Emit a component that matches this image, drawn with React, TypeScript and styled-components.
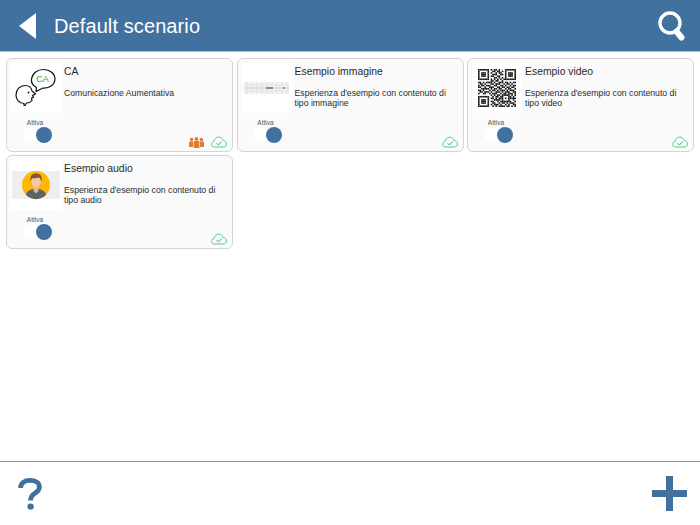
import React from 'react';
import styled, { createGlobalStyle } from 'styled-components';

const Global = createGlobalStyle`
  html, body {
    margin: 0;
    padding: 0;
    background: #fff;
    font-family: "Liberation Sans", Arial, sans-serif;
  }
`;

const Page = styled.div`
  width: 700px;
  height: 525px;
  display: flex;
  flex-direction: column;
  overflow: hidden;
`;

const Header = styled.header`
  height: 51px;
  flex: none;
  background: #41719f;
  border-bottom: 1px solid #a9bfd4;
  display: flex;
  align-items: center;
  padding: 0 15px 0 19px;
  color: #fff;
`;

const Title = styled.h1`
  flex: 1;
  margin: 1px 0 0 18px;
  font-size: 20px;
  font-weight: 400;
  letter-spacing: 0.1px;
`;

const Grid = styled.main`
  flex: 1;
  display: grid;
  grid-template-columns: repeat(3, 227px);
  grid-auto-rows: 94px;
  column-gap: 3.5px;
  row-gap: 3px;
  align-content: start;
  padding: 6px 6px 0;
`;

const Card = styled.article`
  position: relative;
  box-sizing: border-box;
  display: grid;
  grid-template-columns: 50px 1fr;
  column-gap: 3px;
  padding: 4px 10px 0 4px;
  background: #fafafa;
  border: 1px solid #d4d4d4;
  border-radius: 6px;
`;

const Side = styled.div`
  display: flex;
  flex-direction: column;
  align-items: center;
`;

const Thumb = styled.div`
  width: 50px;
  height: 50px;
  background: #fff;
  display: flex;
  align-items: center;
  justify-content: center;
`;

const ToggleLabel = styled.span`
  margin-top: 6px;
  margin-right: 2px;
  font-size: 6.5px;
  line-height: 7px;
  color: #555;
`;

const Toggle = styled.div`
  position: relative;
  width: 22px;
  height: 13px;
  margin-top: 2px;
  margin-right: 5px;
  background: #fff;
  border-radius: 7px;
`;

const Knob = styled.span`
  position: absolute;
  right: -7px;
  top: -1.5px;
  width: 16px;
  height: 16px;
  border-radius: 50%;
  background: #41719f;
`;

const Body = styled.div`
  padding-top: 2px;
`;

const CardTitle = styled.h2`
  margin: 0;
  font-size: 10.4px;
  line-height: 13px;
  font-weight: 400;
  color: #2a2a2a;
`;

const CardText = styled.p`
  margin: 9.5px 0 0;
  font-size: 8.7px;
  line-height: 10.5px;
  color: #2a2a2a;
`;

const Badges = styled.div`
  position: absolute;
  right: 5px;
  bottom: 3px;
  display: flex;
  align-items: center;
  gap: 7px;
`;

const Footer = styled.footer`
  height: 64px;
  flex: none;
  box-sizing: border-box;
  border-top: 1px solid #7d9ab8;
  display: flex;
  align-items: center;
  justify-content: space-between;
  padding: 0 13px 0 18px;
`;

const SpeechIcon = () => (
  <svg width="50" height="50" viewBox="0 0 50 50">
    <g fill="#fff" stroke="#111" strokeWidth="1.2" strokeLinejoin="round" strokeLinecap="round">
      <path d="M25 28.5 L25.5 24.5 C21.5 22.5 20 19.5 20.5 16 C21.5 10 26.5 6.5 32.5 6.5 C39 6.5 44 10.5 44 16 C44 21.5 38.5 25.5 32 25 Z" />
      <path d="M13 42.5 L13 40.5 C8 40.5 5 36.5 5 32 C5 26.5 9 22.5 14 22.5 C18 22.5 20.5 25 21 28 L24.5 31 L21.5 32.5 L22.5 34.5 L20.5 35 L21 37.5 C19.5 39.5 17.5 40 15.5 40 L14 42.5 Z" />
    </g>
    <text x="31.5" y="18.5" textAnchor="middle" fontFamily="Liberation Sans" fontSize="9" fill="#3aa63a">CA</text>
    <circle cx="17.5" cy="29.5" r="0.9" fill="#111" />
  </svg>
);

const ChartThumb = () => (
  <svg width="50" height="50" viewBox="0 0 50 50">
    <rect x="2" y="19" width="45" height="12" fill="#f2f2f2" />
    <g stroke="#cfcfcf" strokeWidth="0.4">
      {[5, 10, 15, 20, 25, 30, 35, 40, 45].map(x => (
        <line key={x} x1={x} y1="19" x2={x} y2="31" />
      ))}
      <line x1="2" y1="22" x2="47" y2="22" />
      <line x1="2" y1="28" x2="47" y2="28" />
    </g>
    <line x1="2" y1="25" x2="47" y2="25" stroke="#bbb" strokeWidth="0.6" />
    <rect x="24" y="24" width="7" height="2" fill="#8c8c8c" />
    <circle cx="42" cy="25" r="1" fill="#888" />
  </svg>
);

// finder patterns plus a hand-picked fill for the data modules
const QR_ROWS = [
  '111111101011010001111111',
  '100000100110110101000001',
  '101110101001011001011101',
  '101110100111001101011101',
  '101110101100110001011101',
  '100000100011010101000001',
  '111111101010101011111111',
  '000000001101100100000000',
  '110101111010011101101011',
  '011010001101110010110100',
  '101101110011001101001011',
  '110010011100110110110110',
  '001111101011011001011001',
  '110100010110101110101110',
  '011011101001110101110011',
  '100110010111001011011101',
  '000000001010110111110101',
  '111111100101101100011010',
  '100000101101011101011111',
  '101110100011110100010010',
  '101110101100101111111001',
  '101110100110010110101110',
  '100000101011101001010011',
  '111111100101011110110101',
];

const QrThumb = () => (
  <svg width="38" height="38" viewBox="0 0 24 24">
    {QR_ROWS.map((row, y) =>
      row.split('').map((c, x) =>
        c === '1' ? <rect key={`${x}-${y}`} x={x} y={y} width="1" height="1" fill="#111" /> : null
      )
    )}
  </svg>
);

const AvatarThumb = () => (
  <svg width="50" height="50" viewBox="0 0 50 50">
    <rect x="1" y="11" width="48" height="28" fill="#eeeeee" />
    <circle cx="25" cy="25" r="14" fill="#fdb900" />
    <path d="M15 35 C15.5 31 19 30 22 29 L28 29 C31 30 34.5 31 35 35 C29 40.5 21 40.5 15 35 Z" fill="#58636c" />
    <path d="M22.5 25 L27.5 25 L27.5 31 L25 33.5 L22.5 31 Z" fill="#e9b78f" />
    <ellipse cx="25" cy="21.5" rx="4.8" ry="6.2" fill="#f3c9a5" />
    <path d="M19.8 22 C18 15.5 22 13 25.5 13.5 C29.5 13.5 32 16.5 30.2 22 C30 19.5 29 18 27.5 17.5 C25 18.5 22 18 20.8 18.5 C20 19.5 20 21 19.8 22 Z" fill="#8a5630" />
  </svg>
);

const PeopleIcon = () => (
  <svg width="15" height="11" viewBox="0 0 15 11" fill="#e07b39">
    <circle cx="2.6" cy="2.6" r="1.8" />
    <circle cx="7.5" cy="1.9" r="1.9" />
    <circle cx="12.4" cy="2.6" r="1.8" />
    <path d="M0 5.2 Q0 4.6 1 4.6 L4 4.6 L4 10 L0 10 Z" />
    <path d="M4.6 4.2 Q4.6 3.9 5.4 3.9 L9.6 3.9 Q10.4 3.9 10.4 4.2 L10.4 11 L4.6 11 Z" />
    <path d="M11 4.6 L14 4.6 Q15 4.6 15 5.2 L15 10 L11 10 Z" />
  </svg>
);

const CloudIcon = () => (
  <svg width="16" height="12" viewBox="0 0 17 12" fill="none" stroke="#3fd07c" strokeWidth="1" strokeLinecap="round" strokeLinejoin="round">
    <path d="M3.6 11.3 C1.6 11.3 0.5 10 0.5 8.5 C0.5 7 1.6 5.9 3 5.8 C3.3 3 5.5 0.8 8.2 0.8 C10.6 0.8 12.3 2.4 12.9 4.4 C15 4.5 16.5 6.2 16.5 8 C16.5 10 15 11.3 13.2 11.3 Z" />
    <path d="M6.3 7.6 L7.9 9.2 L11 5.9" stroke="#2f9e58" />
  </svg>
);

const SearchIcon = () => (
  <svg width="27" height="30" viewBox="0 0 27 30" fill="none" stroke="#fff" strokeLinecap="round">
    <circle cx="12" cy="12" r="10" strokeWidth="3.4" />
    <line x1="18.5" y1="20.5" x2="23.5" y2="26.5" strokeWidth="6" />
  </svg>
);

const BackIcon = () => (
  <svg width="17" height="26" viewBox="0 0 17 26">
    <path d="M0 13 L17 0 L17 26 Z" fill="#fff" />
  </svg>
);

const HelpIcon = () => (
  <svg width="24" height="32" viewBox="0 0 24 32" fill="none" stroke="#41719f">
    <path d="M2.6 10 C2.6 5 6.5 2.4 12 2.4 C17.8 2.4 21.4 5 21.4 9 C21.4 12.5 19 14 16.5 15.6 C13.6 17.5 12.6 19 12.6 22.5" strokeWidth="4.8" />
    <circle cx="12.6" cy="28.6" r="3.2" fill="#41719f" stroke="none" />
  </svg>
);

const PlusIcon = () => (
  <svg width="35" height="35" viewBox="0 0 35 35">
    <path d="M14 0 H21 V14 H35 V21 H21 V35 H14 V21 H0 V14 H14 Z" fill="#41719f" />
  </svg>
);

type Scenario = {
  title: string;
  text: string;
  thumb: React.ReactElement;
  shared?: boolean;
};

const scenarios: Scenario[] = [
  { title: 'CA', text: 'Comunicazione Aumentativa', thumb: <SpeechIcon />, shared: true },
  { title: 'Esempio immagine', text: "Esperienza d'esempio con contenuto di tipo immagine", thumb: <ChartThumb /> },
  { title: 'Esempio video', text: "Esperienza d'esempio con contenuto di tipo video", thumb: <QrThumb /> },
  { title: 'Esempio audio', text: "Esperienza d'esempio con contenuto di tipo audio", thumb: <AvatarThumb /> },
];

export default function App() {
  return (
    <Page>
      <Global />
      <Header>
        <BackIcon />
        <Title>Default scenario</Title>
        <SearchIcon />
      </Header>
      <Grid>
        {scenarios.map(s => (
          <Card key={s.title}>
            <Side>
              <Thumb>{s.thumb}</Thumb>
              <ToggleLabel>Attiva</ToggleLabel>
              <Toggle>
                <Knob />
              </Toggle>
            </Side>
            <Body>
              <CardTitle>{s.title}</CardTitle>
              <CardText>{s.text}</CardText>
            </Body>
            <Badges>
              {s.shared && <PeopleIcon />}
              <CloudIcon />
            </Badges>
          </Card>
        ))}
      </Grid>
      <Footer>
        <HelpIcon />
        <PlusIcon />
      </Footer>
    </Page>
  );
}
